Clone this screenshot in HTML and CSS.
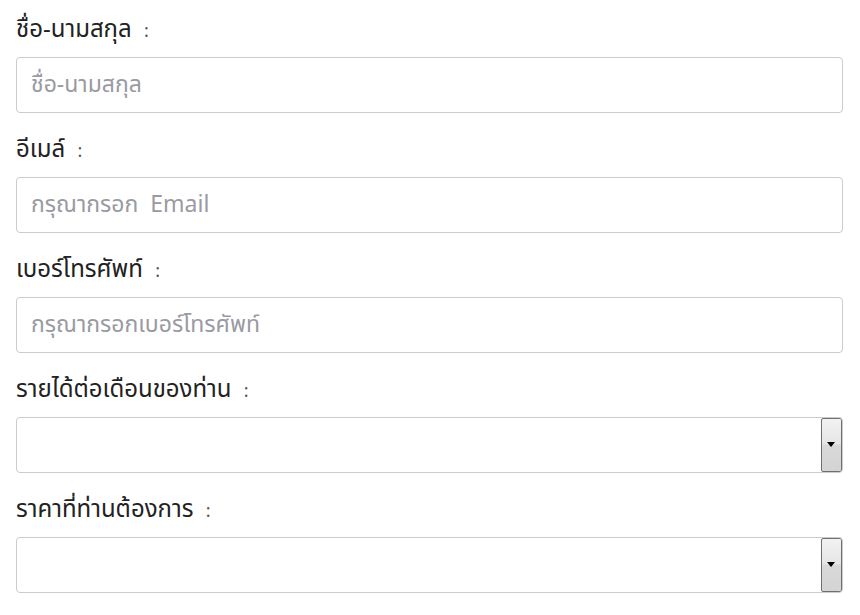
FILE: index.html
```html
<!DOCTYPE html>
<html lang="th">
<head>
    <meta charset="UTF-8">
    <meta name="viewport" content="width=device-width, initial-scale=1.0">
    <title>ฟอร์มลงทะเบียน</title>
    <link rel="stylesheet" href="styles.css">
</head>
<body>
    <form class="form">
        <div class="field">
            <label for="name">ชื่อ-นามสกุล <span class="colon">:</span></label>
            <input id="name" type="text" placeholder="ชื่อ-นามสกุล">
        </div>
        <div class="field">
            <label for="email">อีเมล์ <span class="colon">:</span></label>
            <input id="email" type="text" placeholder="กรุณากรอก  Email">
        </div>
        <div class="field">
            <label for="tel">เบอร์โทรศัพท์ <span class="colon">:</span></label>
            <input id="tel" type="text" placeholder="กรุณากรอกเบอร์โทรศัพท์">
        </div>
        <div class="field">
            <label for="income">รายได้ต่อเดือนของท่าน <span class="colon">:</span></label>
            <div class="select-box">
                <select id="income"></select>
                <span class="select-btn"></span>
            </div>
        </div>
        <div class="field">
            <label for="price">ราคาที่ท่านต้องการ <span class="colon">:</span></label>
            <div class="select-box">
                <select id="price"></select>
                <span class="select-btn"></span>
            </div>
        </div>
    </form>
</body>
</html>
```

FILE: styles.css
```css
html,body{
    margin:0px;
    padding:0px;
}
body{
    background:#fff;
    font-family: Tahoma, "Noto Sans Thai", "Noto Sans", "DejaVu Sans", sans-serif;
    color:#222;
}
.form{
    padding:15px 0 0 16px;
    width:827px;
}
.field{
    margin-bottom:22px;
}
.field>label{
    display:block;
    font-size:24px;
    line-height:30px;
    height:30px;
    margin-bottom:12px;
}
.colon{
    margin-left:6px;
    font-size:18px;
    color:#555;
}
.field>input{
    display:block;
    box-sizing:border-box;
    width:100%;
    height:56px;
    margin:0;
    padding:0 14px;
    border:1px solid #ccc;
    border-radius:4px;
    font-family:inherit;
    font-size:23px;
    color:#555;
    outline:none;
}
.field>input::placeholder{
    color:#9a9aa2;
}
.select-box{
    display:flex;
    box-sizing:border-box;
    height:56px;
    border:1px solid #ccc;
    border-radius:4px;
    overflow:hidden;
}
.select-box>select{
    flex:1;
    appearance:none;
    -webkit-appearance:none;
    border:none;
    background:transparent;
    font-family:inherit;
    font-size:20px;
    outline:none;
}
.select-btn{
    position:relative;
    box-sizing:border-box;
    width:21px;
    border:1px solid #6f6f6f;
    border-radius:2px;
    background:linear-gradient(#f2f2f2, #e6e6e6 48%, #d9d9d9 50%, #d4d4d4);
}
.select-btn::after{
    content:"";
    position:absolute;
    left:5px;
    top:23px;
    border-left:4px solid transparent;
    border-right:4px solid transparent;
    border-top:5px solid #000;
}
```
